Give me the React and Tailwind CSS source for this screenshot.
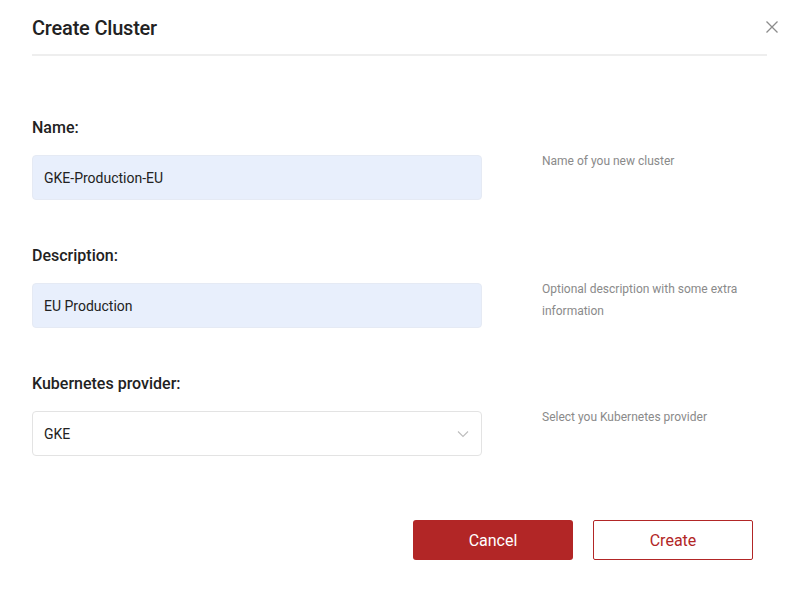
export default function App() {
  const fields = [
    { label: "Name:", value: "GKE-Production-EU", help: "Name of you new cluster", type: "input" },
    { label: "Description:", value: "EU Production", help: "Optional description with some extra information", type: "input" },
    { label: "Kubernetes provider:", value: "GKE", help: "Select you Kubernetes provider", type: "select" },
  ];
  return (
    <div className="w-[799px] h-[596px] bg-white relative" style={{ fontFamily: "Roboto, 'Liberation Sans', sans-serif" }}>
      <div className="mx-8 h-[56px] border-b-2 border-[#eeeeee] flex items-start pt-[15px]">
        <h1 className="text-[20px] leading-[26px] font-medium text-[#222222] tracking-[-0.2px]">Create Cluster</h1>
      </div>
      <button className="absolute left-[766px] top-[21px] w-[12px] h-[12px]">
        <svg width="12" height="12" viewBox="0 0 12 12" fill="none" stroke="#8c8c8c" strokeWidth="1.3">
          <path d="M0.5 0.5 L11.5 11.5 M11.5 0.5 L0.5 11.5" />
        </svg>
      </button>
      <div className="px-8 pt-[60px] flex flex-col gap-[44px]">
        {fields.map((f) => (
          <div key={f.label} className="flex">
            <div className="w-[450px] flex flex-col gap-[15px]">
              <div className="text-[16px] leading-[24px] font-medium text-[#222222]">{f.label}</div>
              {f.type === "input" ? (
                <div className="h-[45px] rounded-[4px] bg-[#e8effc] border border-[#e5eaf4] flex items-center px-[11px] pt-[1px] text-[14px] text-[#222222]">
                  {f.value}
                </div>
              ) : (
                <div className="h-[45px] rounded-[4px] bg-white border border-[#e3e3e3] flex items-center justify-between px-[11px] pt-[1px] text-[14px] text-[#222222]">
                  <span>{f.value}</span>
                  <svg width="12" height="8" viewBox="0 0 12 8" fill="none" stroke="#bdbdbd" strokeWidth="1.1" className="mr-[1px]">
                    <path d="M1 1.5 L6 6.5 L11 1.5" />
                  </svg>
                </div>
              )}
            </div>
            <div className="ml-[60px] pt-[34px] w-[220px] text-[12px] leading-[22px] text-[#8a8a8a]">{f.help}</div>
          </div>
        ))}
      </div>
      <div className="flex justify-end gap-[20px] pr-[46px] mt-[64px]">
        <button className="w-[160px] h-[40px] rounded-[3px] bg-[#b22626] text-white text-[16px] pt-[1px]">Cancel</button>
        <button className="w-[160px] h-[40px] rounded-[2px] border border-[#b22626] bg-white text-[#b22626] text-[16px] pt-[1px]">Create</button>
      </div>
    </div>
  );
}
